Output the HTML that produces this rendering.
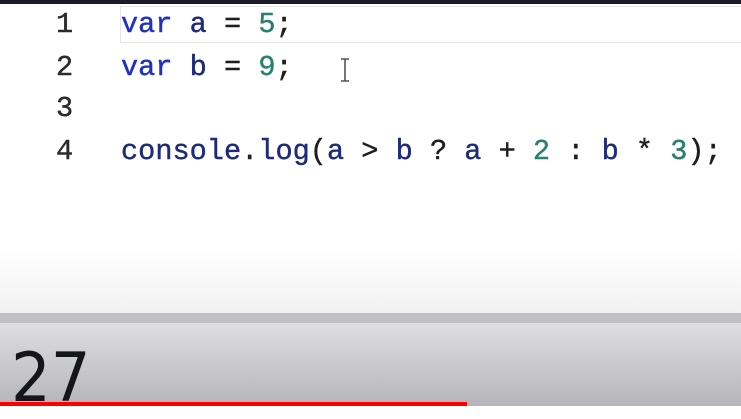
<html><head><style>
body{margin:0;width:741px;height:406px;overflow:hidden;position:relative;background:#fff;font-family:"Liberation Mono",monospace}
.top{position:absolute;left:0;top:0;width:741px;height:4px;background:#1a1a2a}
.hl{position:absolute;left:120px;top:6px;width:630px;height:37px;border:1px solid #e6e6e6;box-sizing:border-box}
.ln{position:absolute;left:56px;font-size:28.6px;color:#2b2b2b;line-height:42px;-webkit-text-stroke:0.4px #2b2b2b}
.code{position:absolute;left:121px;font-size:28.6px;line-height:42px;color:#1e1e1e;white-space:pre;-webkit-text-stroke:0.4px currentColor}
.k{color:#2030c0}.v{color:#1e2a7a}.n{color:#2a8070}
.ed{position:absolute;left:0;top:250px;width:741px;height:63px;background:linear-gradient(#fff,#f1f1f1)}
.band{position:absolute;left:0;top:313px;width:741px;height:10px;background:#c0c0c4}
.out{position:absolute;left:0;top:323px;width:741px;height:83px;background:linear-gradient(#dedee2,#b6b6ba)}
.big{position:absolute;left:11px;top:339px;font-family:"DejaVu Sans",sans-serif;font-size:68px;color:#15151c;line-height:80px;transform:scaleX(0.92);transform-origin:left}
.red{position:absolute;left:0;top:402px;width:467px;height:4px;background:#f00}
</style></head><body>
<div class="top"></div>
<div class="hl"></div>
<div class="ed"></div>
<div class="ln" style="top:4px">1</div>
<div class="ln" style="top:47px">2</div>
<div class="ln" style="top:88px">3</div>
<div class="ln" style="top:131px">4</div>
<div class="code" style="top:4px"><span class="k">var</span> <span class="v">a</span> = <span class="n">5</span>;</div>
<div class="code" style="top:47px"><span class="k">var</span> <span class="v">b</span> = <span class="n">9</span>;</div>
<div class="code" style="top:131px"><span class="v">console</span>.<span class="v">log</span>(<span class="v">a</span> &gt; <span class="v">b</span> ? <span class="v">a</span> + <span class="n">2</span> : <span class="v">b</span> * <span class="n">3</span>);</div>
<svg style="position:absolute;left:338px;top:57px" width="14" height="26"><path d="M3 2h8M7 2v22M3 24h8" stroke="#555" stroke-width="1.6" fill="none"/></svg>
<div class="band"></div>
<div class="out"></div>
<div class="big">27</div>
<div class="red"></div>
</body></html>
